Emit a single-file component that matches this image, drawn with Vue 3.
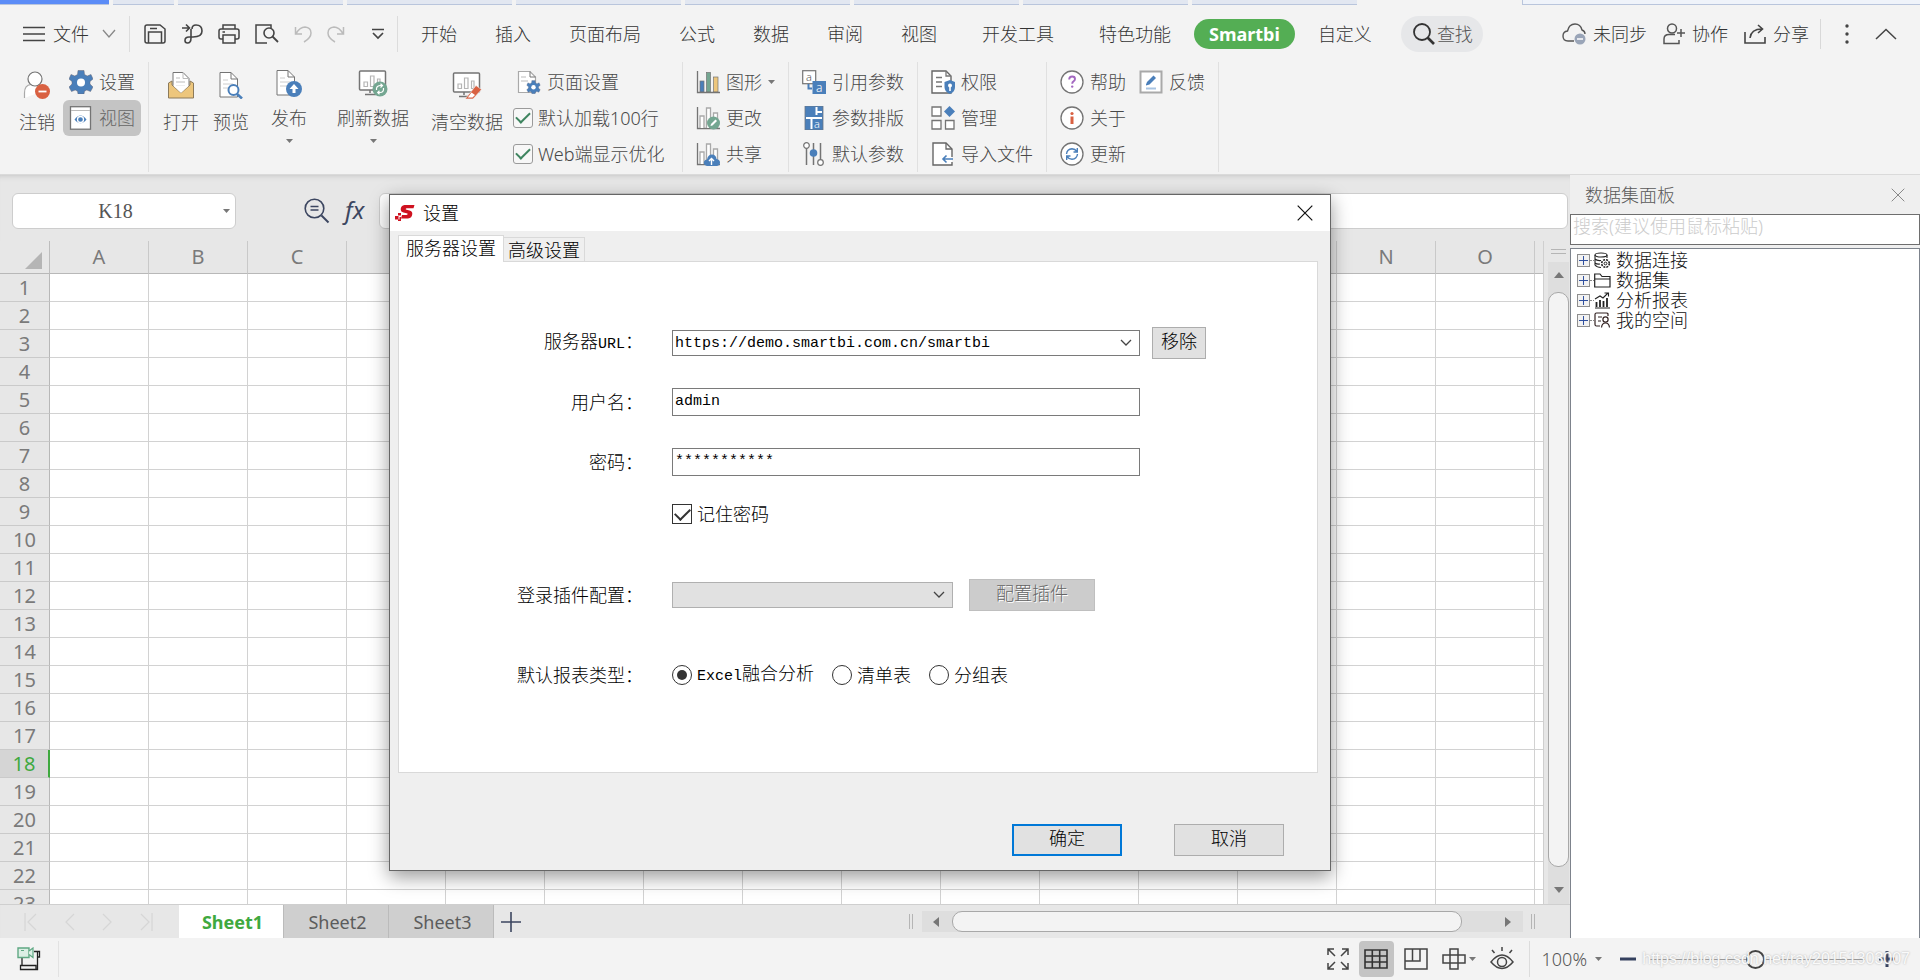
<script setup>
import { h, ref } from 'vue'

const B = '#4a7fba'
const R = '#d96142'
const G = '#74a691'
const Y = '#edc67c'
const S = '#747474'
const L = '#a9a9a9'
const doc = `<path d="M2 1.500H13L19.500 8V26H2Z" fill="#fff" stroke="${S}"/><path d="M13 1.500V8H19.500" fill="none" stroke="${S}"/><path d="M5 9H10M5 13H15M5 17H12" stroke="#ccc" fill="none"/>`
const monitor = `<rect x="1.500" y="2" width="26" height="19" rx="1" fill="#fff" stroke="${S}" stroke-width="1.500"/><path d="M6 17.500V13H9.500V17.500ZM12.500 17.500V7H16V17.500ZM19.500 17.500V10H22V17.500Z" fill="none" stroke="#b5b5b5" stroke-width="1.200"/><path d="M12 21V24M7 25.500H18" stroke="${S}" fill="none" stroke-width="1.500"/>`
const chart = `<path d="M1.500 1V22.500H24" fill="none" stroke="${S}" stroke-width="1.300"/><path d="M4 22V10H8V22M10.500 22V2H14.500V22M17.500 22V7H21.500V22" fill="#fff" stroke="${L}" stroke-width="1.300"/>`
const gear = (x, y, k, hole) => `<g transform="translate(${x} ${y}) scale(${k})"><path fill="${B}" stroke="#667" stroke-width=".5" d="M-3 -11.500H3L3.500 -7.500L6.200 -6L10 -7.500L12 -3L9 -.5V2L12 5L9.500 9.500L5.800 8L3.500 9.200L3 12H-3L-3.500 9.200L-5.800 8L-9.500 9.500L-12 5L-9 2V-.5L-12 -3L-10 -7.500L-6.200 -6L-3.500 -7.500Z"/><circle r="${hole}" cy=".5" fill="#fff"/></g>`
const circ = `<circle cx="12" cy="12" r="11" fill="#fff" stroke="${S}" stroke-width="1.300"/>`

const icons = {
  menu: [22, 16, `<path d="M0 1.500H22M0 8H22M0 14.500H22" stroke="#444" stroke-width="1.500"/>`],
  down: [14, 10, `<path d="M1 1L7 8L13 1" fill="none" stroke="#888" stroke-width="1.300"/>`],
  save: [22, 20, `<path d="M1 3Q1 1 3 1H16L21 5V17Q21 19 19 19H3Q1 19 1 17Z" fill="none" stroke="#444" stroke-width="1.500"/><path d="M4.500 19V8H17.500V19M6 4.500H13" fill="none" stroke="#444" stroke-width="1.500"/>`],
  swirl: [22, 22, `<path d="M1 5H8M5 1.500L8.500 5L5 8.500M11 6Q11 2 15 2Q21 2 21 8Q21 14 12 14H8Q4 14 4 17.500Q4 20 6.500 20Q10 20 10 15V6" fill="none" stroke="#444" stroke-width="1.600"/>`],
  printer: [22, 20, `<path d="M5 5V1H17V5M5 15H3Q1 15 1 13V7Q1 5 3 5H19Q21 5 21 7V13Q21 15 19 15H17" fill="none" stroke="#444" stroke-width="1.500"/><path d="M5 11H17V19H5ZM4.500 8H7" fill="none" stroke="#444" stroke-width="1.500"/>`],
  preview: [24, 20, `<path d="M16 4V1H1V19H12" fill="none" stroke="#444" stroke-width="1.500"/><circle cx="14" cy="9" r="5" fill="none" stroke="#444" stroke-width="1.600"/><path d="M17.500 12.500L23 18" stroke="#444" stroke-width="1.800"/>`],
  undo: [18, 18, `<path d="M1.500 2V9H8M2 8.500Q6 2 11 2Q17 2.500 17 8Q17 13 10 17" fill="none" stroke="#bbb" stroke-width="1.500"/>`],
  redo: [18, 18, `<path d="M16.500 2V9H10M16 8.500Q12 2 7 2Q1 2.500 1 8Q1 13 8 17" fill="none" stroke="#bbb" stroke-width="1.500"/>`],
  more: [12, 12, `<path d="M0 1.500H12M1 5L6 10L11 5" fill="none" stroke="#444" stroke-width="1.700"/>`],
  search: [22, 22, `<circle cx="9" cy="9" r="8" fill="none" stroke="#333" stroke-width="1.800"/><path d="M14.500 14.500L21 21" stroke="#333" stroke-width="2.600"/>`],
  cloud: [24, 22, `<path d="M12 18H6Q1 18 1 13Q1 8.500 5.500 8Q7 1 13 1Q18.500 1 20 7Q23 8 23 11" fill="none" stroke="#555" stroke-width="1.400"/><circle cx="18" cy="16" r="5.500" fill="#9aa5b8"/><path d="M15 16H21" stroke="#fff" stroke-width="1.500"/>`],
  person: [22, 22, `<circle cx="9" cy="5.500" r="4.500" fill="none" stroke="#555" stroke-width="1.500"/><path d="M12 11.500H6Q1 11.500 1 16V20.500H16V17M14 10H22M18 6V14" fill="none" stroke="#555" stroke-width="1.500"/>`],
  share: [22, 20, `<path d="M1 8V19H21V13M6 14Q7 5 18 5M14 1L18.500 5L14 9" fill="none" stroke="#444" stroke-width="1.600"/>`],
  dots: [4, 20, `<circle cx="2" cy="2" r="1.700" fill="#444"/><circle cx="2" cy="10" r="1.700" fill="#444"/><circle cx="2" cy="18" r="1.700" fill="#444"/>`],
  up: [22, 12, `<path d="M1 11L11 1.500L21 11" fill="none" stroke="#444" stroke-width="1.500"/>`],
  caret: [7, 4, `<path d="M0 0H7L3.500 4Z" fill="#777"/>`],
  logout: [28, 28, `<path d="M1.500 27V22Q1.500 14 8 13.500H15Q20 15 20 20" fill="#fff" stroke="${L}" stroke-width="1.200"/><circle cx="12" cy="8" r="7" fill="#fff" stroke="${S}" stroke-width="1.200"/><circle cx="19.500" cy="20.500" r="7.500" fill="${R}"/><path d="M15.500 20.500H23.500" stroke="#fff" stroke-width="1.800"/>`],
  gear: [24, 24, gear(12, 12, 1, 4)],
  view: [24, 24, `<rect x="1.500" y=".7" width="20" height="22.500" fill="#fff" stroke="${S}" stroke-width="1.300"/><path d="M2 4.500H21" stroke="#bbb"/><path d="M5.500 13.500Q11.500 5.500 17.500 13.500Q11.500 21 5.500 13.500Z" fill="${B}"/><circle cx="11.500" cy="13.500" r="3" fill="none" stroke="#fff" stroke-width="1.300"/>`],
  open: [28, 28, `<path d="M6 18V1.500H16L22 7.500V18Z" fill="#fff" stroke="${S}"/><path d="M16 1.500V7.500H22M9 7H13M9 11H18M9 15H18" fill="none" stroke="#bbb"/><path d="M1.500 27V12L5 10V14L14 22L23 14V10L26.500 12V27Z" fill="${Y}" stroke="#8c7a5a"/><path d="M6 14.500L14 22L22 14.500Z" fill="#fff"/>`],
  previewDoc: [26, 28, doc + `<circle cx="15.500" cy="19" r="5" fill="#fff" stroke="${B}" stroke-width="2"/><path d="M19 23L24 27.500" stroke="${B}" stroke-width="2.600"/>`],
  publish: [28, 28, doc + `<circle cx="19" cy="20" r="8" fill="${B}"/><path d="M19 15L23.500 20H20.500V24H17.500V20H14.500Z" fill="#fff"/>`],
  refreshData: [30, 28, monitor + `<circle cx="22" cy="20" r="7.500" fill="${G}"/><path d="M18.500 21Q18 17 22 16.500H24M22.500 14.800L24.500 16.500L22.500 18.500M25.500 19Q26 23.500 22 23.500H20M21.500 21.800L19.700 23.500L21.500 25.200" fill="none" stroke="#fff" stroke-width="1.200"/>`],
  clearData: [30, 28, monitor + `<path d="M13.500 27.500L24 14.500L29.500 18.500L21 28H14Z" fill="${R}" stroke="#f3f3f3" stroke-width=".6"/><path d="M16 26.300L19.500 21.500L23 24L20.500 26.500H16Z" fill="#fff"/>`],
  page: [24, 24, `<path d="M1.500 1.500H13L18.500 7V22.500H1.500Z" fill="#fff" stroke="${L}" stroke-width="1.200"/><path d="M13 1.500V7H18.500" fill="none" stroke="${S}"/><path d="M4 7H9M4 11H11" stroke="#bbb"/>` + gear(16.500, 17, 0.560, 4)],
  chartColor: [24, 24, `<rect x="4" y="11" width="4" height="11" fill="${B}" stroke="${S}" stroke-width=".7"/><rect x="10.500" y="2.500" width="4" height="19.500" fill="${G}" stroke="${S}" stroke-width=".7"/><rect x="17.500" y="7" width="4.500" height="15" fill="${Y}" stroke="${S}" stroke-width=".7"/><path d="M1.500 1V22.500H24" fill="none" stroke="${S}" stroke-width="1.300"/>`],
  chartEdit: [24, 24, chart + `<circle cx="17.500" cy="17" r="6.500" fill="${G}"/><path d="M14.500 20L15 18L19.500 13.500L21 15L16.500 19.500Z" fill="#fff"/>`],
  chartShare: [24, 24, chart + `<path d="M11 24Q7 23 8 19.500Q9 17.500 11 17.500Q12 12.500 16 12.500Q20 12.500 20.500 17Q24 17.500 24 20.500Q24 23.500 21 24Z" fill="${B}"/><path d="M15.500 23V17M13 19L15.500 16.500L18 19" fill="none" stroke="#fff" stroke-width="1.400"/>`],
  paramRef: [24, 24, `<rect x=".7" y=".7" width="13" height="13" fill="#fff" stroke="${S}" stroke-width="1.200"/><text x="4" y="10.500" font-size="11" fill="#555" font-family="Noto Sans">a</text><path d="M6.500 14V18.500H10" fill="none" stroke="${B}" stroke-width="2"/><rect x="10.500" y="11" width="13.500" height="13" fill="${B}"/><text x="14" y="21.500" font-size="12" fill="#fff" font-family="Noto Sans">a</text>`],
  paramLayout: [24, 24, `<rect x="3" y="0" width="18" height="24" fill="${B}" stroke="#6a7684" stroke-width=".8"/><path d="M14.500 1V9M14.500 6H20M4 12H20M9.500 12V23" stroke="#fff" stroke-width="2"/><text x="12" y="21.500" font-size="11" fill="#fff" font-family="Noto Sans">a</text>`],
  sliders: [24, 24, `<path d="M4.500 6V23M11.500 1V23M18.500 1V18" stroke="${S}" stroke-width="1.500"/><circle cx="4.500" cy="3.500" r="2.800" fill="#fff" stroke="${S}" stroke-width="1.200"/><circle cx="11.500" cy="11" r="3.800" fill="${B}"/><circle cx="18.500" cy="20.500" r="2.800" fill="#fff" stroke="${S}" stroke-width="1.200"/>`],
  perm: [24, 24, `<path d="M1 1H15L20 6V23H1Z" fill="#fff" stroke="#666" stroke-width="1.400"/><path d="M15 1V6H20M5 7.500H11M5 12H11M5 16.500H11" fill="none" stroke="#777" stroke-width="1.300"/><path d="M13.500 12L19 10L24 12V17Q24 22 19 24Q13.500 22 13.500 17Z" fill="${B}"/><circle cx="19" cy="15.500" r="2" fill="#fff"/><path d="M19 16V21" stroke="#fff" stroke-width="1.600"/>`],
  manage: [24, 24, `<path d="M1 1H10V10H1ZM1 14.500H10V23H1ZM14.500 14.500H23V23H14.500Z" fill="#fff" stroke="${S}" stroke-width="1.300"/><path d="M18.500 0L24 5.500L18.500 11L13 5.500Z" fill="${B}"/>`],
  importFile: [24, 24, `<path d="M21 15V7L15 1H2V23H21V20" fill="#fff" stroke="#666" stroke-width="1.400"/><path d="M15 1V7H21" fill="none" stroke="#666" stroke-width="1.300"/><path d="M22 17H12M15.500 13.500L12 17L15.500 20.500" fill="none" stroke="${B}" stroke-width="1.600"/>`],
  help: [24, 24, circ + `<path d="M9.200 9.500Q9.200 6.500 12.200 6.500Q15 6.500 15 9Q15 10.500 13.500 11.300Q12.200 12 12.200 13.800" fill="none" stroke="#a368c0" stroke-width="1.900"/><circle cx="12.200" cy="16.600" r="1.200" fill="#a368c0"/>`],
  about: [24, 24, circ + `<path d="M12 10.500V18" stroke="${R}" stroke-width="3"/><circle cx="12" cy="7.500" r="1.600" fill="${R}"/>`],
  update: [24, 24, circ + `<path d="M6.500 12Q7 7 12 6.700Q15 6.700 17 9.500M17.300 6V10H13.500M17.500 12Q17 17 12 17.300Q9 17.300 7 14.500M6.700 18V14H10.500" fill="none" stroke="${B}" stroke-width="1.400"/>`],
  feedback: [24, 24, `<rect x="1.500" y="1.500" width="21" height="21" fill="#fff" stroke="${L}" stroke-width="2"/><path d="M7 14.500L8 12L14.500 5.500L17 8L10.500 14.500L7 15.500Z" fill="${B}"/><path d="M7 18.500H17" stroke="#a9c4e2" stroke-width="2"/>`],
  find: [26, 26, `<circle cx="10.500" cy="10.500" r="9.300" fill="none" stroke="#3c4660" stroke-width="1.600"/><path d="M17.500 17.500L24.500 24.500" stroke="#3c4660" stroke-width="2"/><path d="M6.500 8.500H14.500M6.500 12H14.500" stroke="#3c4660" stroke-width="1.500"/>`],
  logo: [20, 18, `<path d="M19.500 1H9.500Q6 1.500 5.700 5Q5.700 8 8.500 8.500L12.500 9.500Q13 10.800 11.500 11H7L6 14.500H13Q17 14 17.300 10Q17.500 7 14.500 6.500L10.800 5.600Q10.500 4.500 11.500 4.300H18.500Z" fill="#cf1220"/><path d="M3 9H6V11.500H3ZM0 12H3.500V15.500H0ZM4.500 13H6V17H3V15.500H4.500Z" fill="#cf1220"/>`],
  close: [16, 16, `<path d="M.7 .7L15.300 15.300M15.300 .7L.7 15.300" stroke="#111" stroke-width="1.200"/>`],
  closeThin: [14, 14, `<path d="M.7 .7L13.300 13.300M13.300 .7L.7 13.300" stroke="#888" stroke-width="1"/>`],
  combo: [12, 8, `<path d="M1 1L6 6L11 1" fill="none" stroke="#444" stroke-width="1.300"/>`],
  db: [17, 17, `<path d="M1 3V13Q3 15.500 7 15.500M13 3V6M1 7Q3 9 7 8.500M1 11Q3 12.500 6 12" fill="none" stroke="#222" stroke-width="1.100"/><ellipse cx="7" cy="3" rx="6" ry="2" fill="none" stroke="#222" stroke-width="1.100"/><circle cx="11.500" cy="11.500" r="3.800" fill="none" stroke="#222" stroke-width="1.600" stroke-dasharray="2 1"/><circle cx="11.500" cy="11.500" r="1.400" fill="none" stroke="#222"/>`],
  folder: [17, 17, `<path d="M.7 15V2H6L8 4.500H16V15ZM.7 7H16" fill="none" stroke="#222" stroke-width="1.200"/>`],
  report: [17, 17, `<path d="M2.500 15V10M6 15V8M9.500 15V9M13 15V6" stroke="#222" stroke-width="1.800"/><path d="M1 7L6 4L9 6L14 1M10.500 1H14.500V4.500M1 16H16" fill="none" stroke="#222" stroke-width="1.100"/>`],
  space: [17, 17, `<path d="M14 4V2Q14 1 12.500 1H2.500Q1 1 1 2.500V12.500Q1 14 2.500 14H6M4 5H8M4 9H7" fill="none" stroke="#322" stroke-width="1.200"/><circle cx="11.500" cy="7.500" r="2.600" fill="none" stroke="#322" stroke-width="1.200"/><path d="M7.500 15.500Q8 11 11.500 11Q15 11 15.500 15.500" fill="none" stroke="#322" stroke-width="1.200"/>`],
  first: [13, 18, `<path d="M1 0V18M12 1L4 9L12 17" fill="none" stroke="#d6d6d6" stroke-width="1.200"/>`],
  prev: [10, 18, `<path d="M9 1L1 9L9 17" fill="none" stroke="#d6d6d6" stroke-width="1.200"/>`],
  next: [10, 18, `<path d="M1 1L9 9L1 17" fill="none" stroke="#d6d6d6" stroke-width="1.200"/>`],
  last: [13, 18, `<path d="M12 0V18M1 1L9 9L1 17" fill="none" stroke="#d6d6d6" stroke-width="1.200"/>`],
  plus: [20, 20, `<path d="M10 0V20M0 10H20" stroke="#3c4660" stroke-width="1.600"/>`],
  triLeft: [6, 10, `<path d="M6 0V10L0 5Z" fill="#777"/>`],
  triRight: [6, 10, `<path d="M0 0V10L6 5Z" fill="#777"/>`],
  triUp: [10, 6, `<path d="M0 6H10L5 0Z" fill="#777"/>`],
  triDown: [10, 6, `<path d="M0 0H10L5 6Z" fill="#777"/>`],
  macro: [24, 24, `<path d="M5 11V19M17 4.500H22.500V10H20.500V22.500H3.500V18.500H19V22M20.500 4.500V10" fill="none" stroke="#222" stroke-width="1.300"/><path d="M1 1H12V10.500H1Z" fill="#dcefe5" stroke="#5fa883" stroke-width="1.400"/><path d="M12 4L16 1V10.500L12 7.500M4 3.500H7" fill="#dcefe5" stroke="#5fa883" stroke-width="1.200"/>`],
  full: [22, 22, `<path d="M1 7V1H7M1 1L8 8M15 1H21V7M21 1L14 8M1 15V21H7M1 21L8 14M15 21H21V15M21 21L14 14" fill="none" stroke="#444" stroke-width="1.500"/>`],
  grid: [24, 20, `<path d="M1 1H23V19H1ZM8.300 1V19M15.700 1V19M1 7H23M1 13H23" fill="none" stroke="#333" stroke-width="1.600"/>`],
  layout: [24, 22, `<path d="M1 1H23V21H1ZM1 13H16V1M8.500 1V13" fill="none" stroke="#444" stroke-width="1.500"/>`],
  cross: [24, 22, `<path d="M8 1H16V21H8ZM1 7H23V15H1Z" fill="none" stroke="#444" stroke-width="1.500"/>`],
  eye: [24, 24, `<path d="M1 15Q12 1 23 15Q12 28 1 15Z" fill="none" stroke="#444" stroke-width="1.500"/><circle cx="12" cy="15" r="4.500" fill="none" stroke="#444" stroke-width="1.500"/><path d="M12 0V4M2 3L4.500 6M22 3L19.500 6" stroke="#444" stroke-width="1.500"/>`],
  zoomOut: [16, 4, `<path d="M0 2H16" stroke="#34405e" stroke-width="3"/>`],
  zoomIn: [16, 16, `<path d="M0 8H16M8 0V16" stroke="#34405e" stroke-width="3"/>`],
}

const Icon = (props) => {
  const [w, ht, body] = icons[props.name]
  return h('svg', {
    width: w, height: ht, viewBox: `0 0 ${w} ${ht}`, class: 'icon',
    'aria-hidden': 'true', innerHTML: body,
  })
}
Icon.props = ['name']

const quick = ['save', 'swirl', 'printer', 'preview', 'undo', 'redo', 'more']
const menus = ['开始', '插入', '页面布局', '公式', '数据', '审阅', '视图', '开发工具', '特色功能']
const chartGroup = [['chartColor', '图形', true], ['chartEdit', '更改'], ['chartShare', '共享']]
const paramGroup = [['paramRef', '引用参数'], ['paramLayout', '参数排版'], ['sliders', '默认参数']]
const manageGroup = [['perm', '权限'], ['manage', '管理'], ['importFile', '导入文件']]
const helpGroup = [['help', '帮助'], ['about', '关于'], ['update', '更新']]
const columns = 'ABCDEFGHIJKLMNOP'.split('')
const tree = [['db', '数据连接'], ['folder', '数据集'], ['report', '分析报表'], ['space', '我的空间']]

const load100 = ref(true)
const webOpt = ref(true)
const nameBox = ref('K18')
const formula = ref('')
const search = ref('')
const url = ref('https://demo.smartbi.com.cn/smartbi')
const user = ref('admin')
const password = ref('***********')
const remember = ref(true)
const reportType = ref('excel')
</script>

<template>
  <div class="app">
    <div class="strip">
      <i class="st active"></i><i class="st short"></i><i v-for="n in 7" :key="n" class="st"></i><i class="st last"></i>
    </div>

    <header class="menubar">
      <button class="file"><Icon name="menu" /><span>文件</span><Icon name="down" /></button>
      <div class="quick">
        <button v-for="q in quick" :key="q" :aria-label="q"><Icon :name="q" /></button>
      </div>
      <nav class="menus">
        <button v-for="(m, i) in menus" :key="m" :class="{ wide: i > 6 }">{{ m }}</button>
      </nav>
      <button class="pill">Smartbi</button>
      <button class="custom">自定义</button>
      <button class="search"><Icon name="search" />查找</button>
      <div class="account">
        <button><Icon name="cloud" />未同步</button>
        <button><Icon name="person" />协作</button>
        <button><Icon name="share" />分享</button>
      </div>
      <div class="extras">
        <button aria-label="更多"><Icon name="dots" /></button>
        <button aria-label="收起"><Icon name="up" /></button>
      </div>
    </header>

    <section class="ribbon">
      <div class="group g-first">
        <button class="big"><Icon name="logout" />注销</button>
        <div class="stack">
          <button class="cmd inset"><Icon name="gear" />设置</button>
          <button class="cmd inset pressed"><Icon name="view" />视图</button>
        </div>
      </div>
      <div class="group g-data">
        <button class="big"><Icon name="open" />打开</button>
        <button class="big"><Icon name="previewDoc" />预览</button>
        <button class="big drop"><Icon name="publish" /><span>发布</span><Icon name="caret" /></button>
        <button class="big drop"><Icon name="refreshData" /><span>刷新数据</span><Icon name="caret" /></button>
        <button class="big"><Icon name="clearData" />清空数据</button>
        <div class="stack checks">
          <button class="cmd page"><Icon name="page" />页面设置</button>
          <label class="cmd"><input v-model="load100" type="checkbox" />默认加载100行</label>
          <label class="cmd"><input v-model="webOpt" type="checkbox" />Web端显示优化</label>
        </div>
      </div>
      <div class="group g-chart">
        <div class="stack">
          <button v-for="c in chartGroup" :key="c[1]" class="cmd"><Icon :name="c[0]" />{{ c[1] }}<Icon v-if="c[2]" name="caret" /></button>
        </div>
      </div>
      <div class="group g-mid">
        <div class="stack">
          <button v-for="c in paramGroup" :key="c[1]" class="cmd"><Icon :name="c[0]" />{{ c[1] }}</button>
        </div>
      </div>
      <div class="group g-mid">
        <div class="stack">
          <button v-for="c in manageGroup" :key="c[1]" class="cmd"><Icon :name="c[0]" />{{ c[1] }}</button>
        </div>
      </div>
      <div class="group g-help">
        <div class="stack">
          <button v-for="c in helpGroup" :key="c[1]" class="cmd"><Icon :name="c[0]" />{{ c[1] }}</button>
        </div>
        <div class="stack">
          <button class="cmd"><Icon name="feedback" />反馈</button>
        </div>
      </div>
    </section>

    <main class="main">
      <section class="book">
        <div class="formula-bar">
          <div class="namebox">
            <input v-model="nameBox" aria-label="名称框" />
            <Icon name="caret" />
          </div>
          <Icon name="find" class="find" />
          <span class="fx">fx</span>
          <input v-model="formula" class="formula" aria-label="编辑栏" />
        </div>

        <div class="sheet-area">
          <div class="sheet">
            <table>
              <thead>
                <tr>
                  <th class="corner"><svg width="17" height="17" viewBox="0 0 17 17" aria-hidden="true"><path d="M17 0V17H0Z" fill="#b5b5b5" /></svg></th>
                  <th v-for="c in columns" :key="c">{{ c }}</th>
                </tr>
              </thead>
              <tbody>
                <tr v-for="r in 23" :key="r">
                  <th :class="{ current: r === 18 }">{{ r }}</th>
                  <td v-for="c in columns" :key="c"></td>
                </tr>
              </tbody>
            </table>
          </div>
          <div class="vscroll">
            <div class="vsplit"></div>
            <div class="vtrack">
              <Icon name="triUp" />
              <div class="vthumb"></div>
              <Icon name="triDown" />
            </div>
          </div>
        </div>

        <div class="tabs-bar">
          <div class="tab-nav">
            <Icon name="first" /><Icon name="prev" /><Icon name="next" /><Icon name="last" />
          </div>
          <button class="sheet-tab on">Sheet1</button>
          <button class="sheet-tab">Sheet2</button>
          <button class="sheet-tab">Sheet3</button>
          <button class="add" aria-label="新建工作表"><Icon name="plus" /></button>
          <div class="hscroll">
            <div class="hsplit"></div>
            <div class="htrack">
              <Icon name="triLeft" />
              <div class="hthumb"></div>
              <Icon name="triRight" />
            </div>
            <div class="hsplit"></div>
          </div>
        </div>
      </section>

      <aside class="panel">
        <div class="panel-head">数据集面板<button aria-label="关闭面板"><Icon name="closeThin" /></button></div>
        <input v-model="search" class="panel-search" placeholder="搜索(建议使用鼠标粘贴)" aria-label="搜索" />
        <ul class="tree">
          <li v-for="t in tree" :key="t[1]"><i class="expander"></i><i class="dash"></i><Icon :name="t[0]" /><span>{{ t[1] }}</span></li>
        </ul>
      </aside>
    </main>

    <footer class="status">
      <div class="status-left"><Icon name="macro" /></div>
      <div class="views">
        <button aria-label="全屏"><Icon name="full" /></button>
        <button class="on" aria-label="普通视图"><Icon name="grid" /></button>
        <button aria-label="分页预览"><Icon name="layout" /></button>
        <button aria-label="阅读模式"><Icon name="cross" /><Icon name="caret" /></button>
        <button aria-label="护眼模式"><Icon name="eye" /></button>
      </div>
      <div class="zoom">
        <button class="pct">100%<Icon name="caret" /></button>
        <button aria-label="缩小"><Icon name="zoomOut" /></button>
        <input type="range" min="0" max="100" value="49" aria-label="缩放" />
        <button aria-label="放大"><Icon name="zoomIn" /></button>
      </div>
      <span class="watermark">https://blog.csdn.net/ray20151303007</span>
    </footer>

    <div class="dialog" role="dialog" aria-label="设置">
      <div class="title"><Icon name="logo" /><span>设置</span><button aria-label="关闭"><Icon name="close" /></button></div>
      <div class="dlg-body">
        <div class="dlg-tabs">
          <button class="on">服务器设置</button>
          <button>高级设置</button>
        </div>
        <div class="pane">
          <div class="row url">
            <label for="url">服务器<span class="latin">URL</span>：</label>
            <div class="field">
              <div class="combo"><select id="url" v-model="url"><option>https://demo.smartbi.com.cn/smartbi</option></select><Icon name="combo" /></div>
              <button class="btn remove">移除</button>
            </div>
          </div>
          <div class="row user">
            <label for="user">用户名：</label>
            <div class="field"><input id="user" v-model="user" class="text" /></div>
          </div>
          <div class="row pwd">
            <label for="pwd">密码：</label>
            <div class="field"><input id="pwd" v-model="password" class="text" autocomplete="off" /></div>
          </div>
          <div class="row remember">
            <span></span>
            <label class="opt"><input v-model="remember" type="checkbox" />记住密码</label>
          </div>
          <div class="row plugin">
            <label for="plugin">登录插件配置：</label>
            <div class="field">
              <div class="combo off"><select id="plugin" disabled></select><Icon name="combo" /></div>
              <button class="btn config" disabled>配置插件</button>
            </div>
          </div>
          <div class="row types">
            <span class="lbl">默认报表类型：</span>
            <div class="field radios">
              <label class="opt"><input v-model="reportType" type="radio" value="excel" /><span><span class="latin">Excel</span>融合分析</span></label>
              <label class="opt"><input v-model="reportType" type="radio" value="list" />清单表</label>
              <label class="opt"><input v-model="reportType" type="radio" value="group" />分组表</label>
            </div>
          </div>
        </div>
        <div class="actions">
          <button class="btn ok">确定</button>
          <button class="btn">取消</button>
        </div>
      </div>
    </div>
  </div>
</template>

<style>
body { background: #f3f3f3; }
</style>

<style scoped>
* { box-sizing: border-box; }
.app {
  position: relative; height: 100vh; display: flex; flex-direction: column; overflow: hidden;
  font: 300 18px/24px "Noto Sans", "Noto Sans CJK SC", sans-serif; color: #333; background: #f3f3f3;
}
button { font: inherit; color: inherit; background: none; border: 0; padding: 0; margin: 0; display: flex; align-items: center; white-space: nowrap; }
input, select { font: inherit; color: inherit; margin: 0; outline: 0; }
.icon { flex: none; display: block; }

.strip { display: flex; flex: none; gap: 4px; height: 5px; }
.st { width: 165px; background: #e2e7f1; border-bottom: 1px solid #b9c5dc; }
.st.active { width: 109px; background: #5b8cf7; }
.st.short { width: 61px; }
.st.last { flex: 1; background: #eff3fa; margin-left: 161px; border-left: 1px solid #b9c5dc; }

.menubar { display: flex; flex: none; align-items: center; height: 57px; padding-right: 23px; }
.menubar > * { flex: none; }
.file { padding-left: 23px; height: 36px; width: 130px; border-right: 1px solid #dcdcdc; }
.file span { margin: 0 13px 0 8px; }
.quick { display: flex; align-items: center; gap: 15px; width: 268px; height: 36px; padding-left: 14px; border-right: 1px solid #dcdcdc; }
.quick button:nth-child(6) { margin-right: 12px; }
.menus { display: flex; gap: 38px; padding-left: 23px; }
.menus .wide { margin-left: 7px; }
.pill { margin-left: 23px; height: 30px; padding: 0 15px; border-radius: 15px; background: #54ae54; color: #fff; font-weight: 700; }
.custom { margin-left: 23px; }
.search { margin-left: 29px; height: 36px; padding: 0 10px 0 12px; gap: 2px; border-radius: 18px; background: #e6e7e9; color: #555; }
.account { display: flex; margin-left: auto; gap: 16px; padding-right: 11px; height: 30px; border-right: 1px solid #d8d8d8; }
.account button { gap: 7px; }
.extras { display: flex; align-items: center; gap: 26px; padding-left: 24px; }

.ribbon { display: flex; flex: none; height: 113px; color: #484848; border-bottom: 1px solid #dadada; }
.group { display: flex; align-items: flex-start; height: 110px; padding-left: 13px; border-right: 1px solid #e0e0e0; }
.big { flex-direction: column; gap: 11px; padding-top: 9px; }
.big.drop { gap: 9px; padding-top: 7px; margin: 0 8px; }
.g-first { width: 149px; padding-left: 19px; gap: 8px; }
.g-data { width: 534px; padding-left: 14px; gap: 14px; }
.g-chart { width: 106px; }
.g-mid { width: 129px; }
.g-help { width: 172px; gap: 13px; }
.stack { padding-top: 2px; }
.cmd { display: flex; align-items: center; gap: 6px; height: 36px; white-space: nowrap; }
.cmd.inset { padding: 0 6px; }
.pressed { background: #c4c4c4; border-radius: 6px; color: #666; }
.checks { margin-left: -4px; }
.checks .cmd { gap: 5px; }
.checks .page { padding-left: 4px; gap: 6px; }
.checks input { appearance: none; width: 20px; height: 20px; border: 1px solid #9a9a9a; border-radius: 3px; background: #f7f7f7; display: grid; place-items: center; }
.checks input:checked::after { content: ""; width: 12px; height: 6px; margin-bottom: 4px; border-left: 2px solid #3f8560; border-bottom: 2px solid #3f8560; transform: rotate(-45deg); }

.main { flex: 1; display: flex; min-height: 0; background: #e7e7e7; }
.book { flex: 1; min-width: 0; display: flex; flex-direction: column; box-shadow: inset 0 6px 6px -6px #bbb; }
.formula-bar { display: flex; flex: none; height: 66px; padding: 18px 2px 0 12px; }
.namebox { display: flex; align-items: center; width: 224px; height: 36px; padding-right: 5px; background: #fff; border: 1px solid #cdcdcd; border-radius: 6px; }
.namebox input { flex: 1; min-width: 0; border: 0; padding: 0 5px 0 0; background: none; text-align: center; color: #555; font: 20px "Liberation Serif", serif; }
.find { margin: 5px 14px 0 68px; }
.fx { width: 35px; padding-left: 1px; font-size: 24px; line-height: 34px; font-style: italic; font-weight: 400; color: #3c4660; }
.formula { flex: 1; min-width: 0; height: 36px; border: 1px solid #cdcdcd; border-radius: 6px; background: #fff; }

.sheet-area { flex: 1; display: flex; min-height: 0; border-bottom: 1px solid #cfcfcf; }
.sheet { flex: 1; min-width: 0; overflow: hidden; border-right: 1px solid #cfcfcf; }
table { table-layout: fixed; width: 1634px; border-collapse: separate; border-spacing: 0; }
th { height: 28px; padding: 0; font-weight: 400; font-size: 20px; line-height: 27px; color: #7a7a7a; background: #e7e7e7; }
td { height: 28px; padding: 0; background: #fff; border-right: 1px solid #d2d2d2; border-bottom: 1px solid #d2d2d2; }
thead th { width: 99px; height: 33px; line-height: 32px; border-bottom: 1px solid #b8b8b8; border-right: 1px solid #c9c9c9; }
thead .corner { width: 50px; border-right-color: #bdbdbd; border-bottom-color: #b8b8b8; }
.corner svg { display: block; margin: 6px 7px 0 auto; }
tbody th { border-right: 1px solid #b8b8b8; border-bottom: 1px solid #cacaca; }
tbody th.current { background: #d5d5d5; color: #3fa93f; border-right: 2px solid #3fa93f; }

.vscroll { flex: none; display: flex; flex-direction: column; width: 26px; padding: 0 1px 0 4px; }
.vsplit { flex: none; height: 5px; margin: 8px 3px 8px; border-top: 1px solid #b5b5b5; border-bottom: 1px solid #b5b5b5; }
.vtrack { flex: 1; display: flex; flex-direction: column; align-items: center; padding: 10px 0 11px; background: #dedede; }
.vthumb { flex: 1; align-self: stretch; margin: 14px 0 20px; border: 1px solid #a8a8a8; border-radius: 10px; background: #f3f3f3; }

.tabs-bar { flex: none; display: flex; height: 33px; }
.tab-nav { display: flex; align-items: center; justify-content: space-between; width: 179px; padding: 0 26px 0 24px; }
.sheet-tab { width: 105px; padding-left: 3px; justify-content: center; background: #cfcfcf; border-right: 1px solid #bbb; color: #5c5c5c; font-weight: 400; }
.sheet-tab.on { background: #fff; color: #3fa93f; font-weight: 700; }
.add { margin-left: 7px; }
.hscroll { flex: 1; display: flex; max-width: 626px; margin-left: auto; margin-right: 35px; align-items: center; }
.hsplit { width: 4px; height: 15px; border-left: 1px solid #b5b5b5; border-right: 1px solid #b5b5b5; }
.htrack { flex: 1; display: flex; align-items: center; height: 21px; margin: 0 8px 0 9px; padding: 0 12px 0 11px; background: #dedede; }
.hthumb { flex: 1; height: 21px; margin: 0 43px 0 13px; border: 1px solid #a8a8a8; border-radius: 10px; background: #f3f3f3; }

.panel { flex: none; display: flex; flex-direction: column; width: 350px; background: #efefef; }
.panel-head { display: flex; align-items: center; justify-content: space-between; height: 39px; padding: 0 15px; color: #5a5a5a; }
.panel-search { height: 31px; padding: 0 2px 7px; border: 1px solid #6e6e6e; background: #fff; font-weight: 300; }
.panel-search::placeholder { color: #ccc; }
.tree { flex: 1; margin: 3px 0 0; padding: 1px 6px; list-style: none; background: #fff; border: 1px solid #7d838c; border-bottom: 0; color: #111; }
.tree li { display: flex; align-items: center; height: 20px; }
.tree span { margin-left: 5px; }
.expander { width: 13px; height: 13px; border: 1px solid #8e8e8e; background: linear-gradient(#3050a0, #3050a0) center / 9px 1px no-repeat, linear-gradient(#3050a0, #3050a0) center / 1px 9px no-repeat, #f2f2f2; }
.dash { width: 4px; border-top: 1px dotted #888; }

.status { position: relative; flex: none; display: flex; align-items: center; height: 42px; padding-right: 25px; color: #555; }
.status-left { display: flex; align-items: center; height: 36px; width: 59px; padding-left: 17px; border-right: 1px solid #e2e2e2; }
.views { display: flex; align-items: center; gap: 10px; height: 36px; margin-left: auto; padding-right: 15px; border-right: 1px solid #dcdcdc; }
.views button { height: 36px; gap: 3px; }
.views .on { width: 35px; justify-content: center; background: #c4c4c4; border-radius: 4px; }
.views button:nth-child(n + 4) { margin-left: 4px; }
.zoom { display: flex; align-items: center; padding-left: 12px; gap: 14px; }
.pct { gap: 8px; margin-right: 4px; }
.zoom input { appearance: none; width: 215px; height: 20px; background: linear-gradient(#999, #999) center / 100% 1px no-repeat; }
.zoom input::-webkit-slider-thumb { appearance: none; width: 19px; height: 19px; border-radius: 50%; border: 2px solid #444; background: #f3f3f3; }
.watermark { position: absolute; right: 10px; top: 9px; font: 16px/24px "Liberation Sans", sans-serif; color: #fafafa; text-shadow: 0 0 2px #aaa; }

.dialog {
  position: absolute; left: 389px; top: 194px; width: 942px; background: #efefef; border: 1px solid #666;
  box-shadow: 0 6px 18px rgba(0, 0, 0, .4); color: #000;
}
.title { display: flex; align-items: center; height: 36px; padding: 0 17px 0 5px; background: #fff; }
.title span { margin-left: 8px; }
.title button { margin-left: auto; }
.dlg-body { padding: 4px 12px 14px 8px; }
.dlg-tabs { display: flex; align-items: flex-end; }
.dlg-tabs button { justify-content: center; width: 81px; height: 24px; border: 1px solid #d9d9d9; border-bottom: 0; border-left: 0; }
.dlg-tabs .on { position: relative; z-index: 1; width: 106px; height: 27px; padding-bottom: 3px; margin-bottom: -1px; background: #fff; border-left: 1px solid #d9d9d9; }
.pane { padding: 65px 0 83px; background: #fff; border: 1px solid #d9d9d9; }
.row { display: grid; grid-template-columns: 244px 1fr; column-gap: 29px; align-items: center; }
.row > label:first-child, .row > .lbl { text-align: right; }
.latin { font: 15px/24px "Liberation Mono", monospace; }
.field { display: flex; align-items: center; }
.combo { position: relative; width: 468px; height: 26px; }
.combo select { display: block; appearance: none; width: 100%; height: 100%; padding: 0 2px; border: 1px solid #7a7a7a; border-radius: 0; background: #fff; color: #000; opacity: 1; font: 15px "Liberation Mono", monospace; }
.combo .icon { position: absolute; right: 8px; top: 9px; }
.combo.off { width: 281px; }
.combo.off select { background: #e1e1e1; border-color: #b0b0b0; }
.text { width: 468px; height: 28px; padding: 0 2px 2px; border: 1px solid #7a7a7a; background: #fff; font: 15px "Liberation Mono", monospace; }
.btn { justify-content: center; width: 110px; height: 32px; padding-bottom: 4px; background: #e1e1e1; border: 1px solid #adadad; }
.btn.remove { width: 54px; margin-left: 12px; }
.btn.config { width: 126px; margin-left: 16px; background: #ccc; border-color: #bfbfbf; color: #666; text-shadow: 1px 1px 0 #fff; }
.btn.ok { border: 2px solid #0078d7; }
.row.user { margin-top: 29px; }
.row.pwd { margin-top: 32px; }
.row.remember { margin-top: 26px; }
.row.plugin { margin-top: 53px; }
.row.types { margin-top: 50px; }
.opt { display: flex; align-items: center; gap: 5px; }
.opt input { appearance: none; width: 20px; height: 20px; border: 1px solid #333; background: #fff; display: grid; place-items: center; }
.opt input[type="radio"] { border-radius: 50%; }
.opt input[type="radio"]:checked::after { content: ""; width: 10px; height: 10px; border-radius: 50%; background: #333; }
.opt input[type="checkbox"]:checked::after { content: ""; width: 13px; height: 7px; margin-bottom: 4px; border-left: 2px solid #333; border-bottom: 2px solid #333; transform: rotate(-45deg); }
.radios { gap: 18px; }
.actions { display: flex; justify-content: flex-end; gap: 52px; padding: 51px 34px 0 0; }
</style>
